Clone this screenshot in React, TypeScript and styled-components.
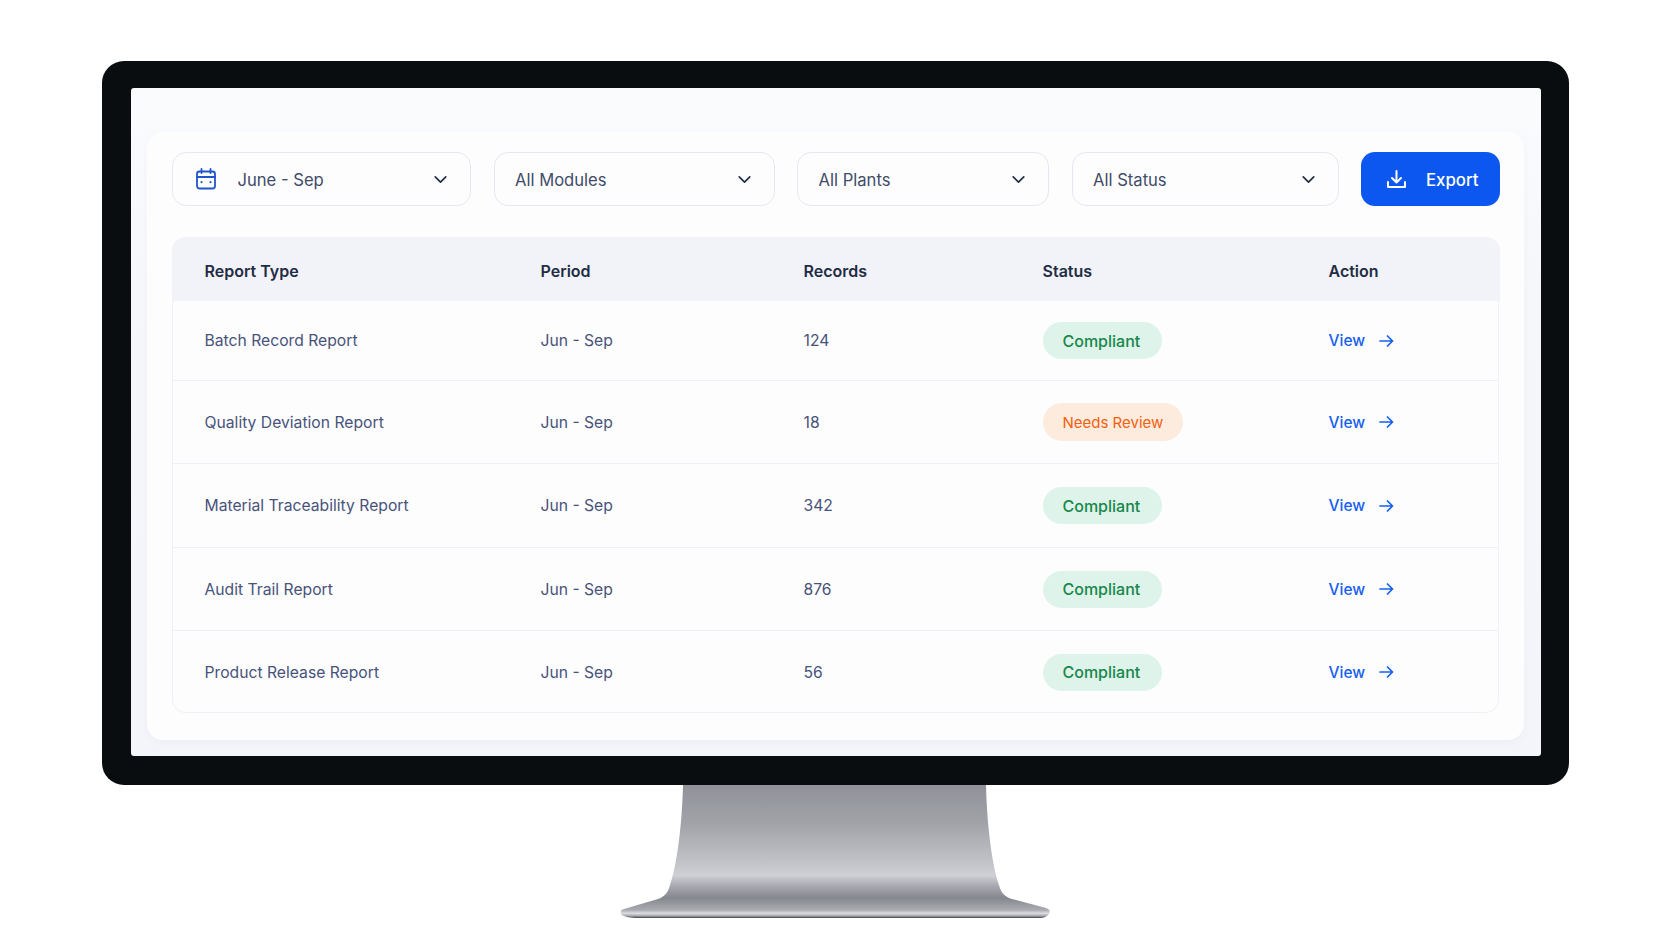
import React from 'react'
import styled, { createGlobalStyle } from 'styled-components'
import { ChevronDown } from 'lucide-react'

const GlobalStyle = createGlobalStyle`
  html, body {
    margin: 0;
    background: #fff;
  }
  body {
    font-family: 'Inter', 'Noto Sans', sans-serif;
    -webkit-font-smoothing: antialiased;
  }
`

const Page = styled.div`
  box-sizing: border-box;
  width: 1670px;
  height: 942px;
  padding: 61px 101px 0 102px;
  display: flex;
  flex-direction: column;
  align-items: center;
  overflow: hidden;
`

const Bezel = styled.div`
  box-sizing: border-box;
  width: 100%;
  height: 724px;
  padding: 27px 28px 29px 29px;
  background: #0a0d10;
  border-radius: 22px;
`

const Screen = styled.div`
  box-sizing: border-box;
  height: 100%;
  padding: 44px 17px 16px 16px;
  background: linear-gradient(180deg, #fafbfd 0%, #f6f7fb 30%, #f4f5fa 100%);
  border-radius: 3px;
`

const Panel = styled.div`
  box-sizing: border-box;
  height: 100%;
  padding: 20px 25px 26px 25px;
  background: #fdfdfe;
  border-radius: 16px;
  box-shadow: 0 3px 8px rgba(120, 130, 170, 0.05);
`

const Toolbar = styled.div`
  display: grid;
  grid-template-columns: 299px 281px 252px 267px 139px;
  column-gap: 22.5px;
  height: 54px;
  margin-bottom: 31px;
`

const Select = styled.div`
  box-sizing: border-box;
  display: flex;
  align-items: center;
  padding: 0 19px 0 20.5px;
  background: #fdfdfe;
  border: 1.5px solid #e6e8f1;
  border-radius: 14px;
  color: #414c68;
  font-size: 16.6px;
  span {
    padding-top: 1px;
  }
  svg:last-child {
    margin-left: auto;
    color: #262f48;
  }
`

const CalendarSvg = styled.svg`
  flex: none;
  margin: 0 22px 0 2px;
`

const ExportButton = styled.div`
  display: flex;
  align-items: center;
  gap: 20px;
  padding-left: 26px;
  background: #0b57f0;
  border-radius: 14px;
  color: #fff;
  font-size: 16.8px;
  font-weight: 500;
  span {
    padding-top: 1px;
  }
`

const Table = styled.div`
  box-sizing: border-box;
  height: 476px;
  border: 1.5px solid #f0f1f8;
  border-top: 0;
  border-radius: 14px;
`

const HeadRow = styled.div`
  box-sizing: border-box;
  display: grid;
  grid-template-columns: 336px 263px 239px 286px 1fr;
  align-items: center;
  height: 64px;
  margin: 0 -1.5px;
  padding: 3px 0 0 33px;
  background: #f2f3f8;
  border-radius: 14px 14px 0 0;
  color: #232c45;
  font-size: 16px;
  font-weight: 600;
`

const Row = styled.div<{ $height: number }>`
  box-sizing: border-box;
  display: grid;
  grid-template-columns: 336px 263px 239px 286px 1fr;
  align-items: center;
  height: ${p => p.$height}px;
  padding-left: 31.5px;
  border-bottom: 1.5px solid #f0f1f8;
  color: #47537a;
  font-size: 15.7px;
  &:last-child {
    border-bottom: 0;
  }
`

const Badge = styled.span<{ $tone: 'ok' | 'warn' }>`
  justify-self: start;
  display: inline-flex;
  align-items: center;
  height: ${p => (p.$tone === 'ok' ? 37 : 38)}px;
  padding: ${p => (p.$tone === 'ok' ? '0 22px 0 20px' : '0 20px 0 20px')};
  border-radius: 19px;
  background: ${p => (p.$tone === 'ok' ? '#def3e9' : '#fdebde')};
  color: ${p => (p.$tone === 'ok' ? '#17874c' : '#f55f10')};
  font-size: ${p => (p.$tone === 'ok' ? 16 : 15)}px;
  font-weight: ${p => (p.$tone === 'ok' ? 500 : 400)};
`

const ViewLink = styled.span`
  display: inline-flex;
  align-items: center;
  gap: 14px;
  color: #1560f0;
  font-size: 15.5px;
  font-weight: 500;
`

const Stand = styled.svg`
  display: block;
  flex: none;
`

const CalendarIcon = () => (
  <CalendarSvg width="20" height="22" viewBox="0 0 20 22" fill="none" stroke="#1f56c9" strokeWidth="1.8" strokeLinecap="round">
    <rect x="1" y="3.5" width="18" height="17" rx="2.5" />
    <path d="M1 9h18M5.5 1v4M14.5 1v4" />
    <path d="M5.5 14v.2M14.5 14v.2" strokeWidth="2" />
  </CalendarSvg>
)

const DownloadIcon = () => (
  <svg width="19" height="18" viewBox="0 0 19 18" fill="none" stroke="#fff" strokeWidth="2" strokeLinecap="round" strokeLinejoin="round">
    <path d="M9.5 1v11.5M5 8l4.5 4.5L14 8" />
    <path d="M1 12v5h17v-5" />
  </svg>
)

const ViewArrow = () => (
  <svg width="15" height="12" viewBox="0 0 15 12" fill="none" stroke="#1560f0" strokeWidth="1.7" strokeLinecap="round" strokeLinejoin="round">
    <path d="M1 6h12.5M8.5 1l5 5-5 5" />
  </svg>
)

const MonitorStand = () => (
  <Stand width="430" height="133" viewBox="0 0 430 133">
    <defs>
      <linearGradient id="neck" x1="0" y1="0" x2="0" y2="1">
        <stop offset="0" stopColor="#909199" />
        <stop offset="0.3" stopColor="#a2a4aa" />
        <stop offset="0.6" stopColor="#c4c5ca" />
        <stop offset="0.68" stopColor="#cfd0d5" />
        <stop offset="0.76" stopColor="#a8a9b0" />
        <stop offset="0.85" stopColor="#85878f" />
        <stop offset="0.94" stopColor="#a9abb1" />
        <stop offset="0.965" stopColor="#dcdde1" />
        <stop offset="0.985" stopColor="#a4a5ab" />
        <stop offset="1" stopColor="#3d3f45" />
      </linearGradient>
    </defs>
    <path
      d="M62 0H365C366 40 371 80 378 100C380 108 384 112 391 114L425 123C429 124 430 128 427 130C425 132 423 133 419 133H17C9 133 4 132 1 130C-2 128 -1 125 3 124L37 114C43 112 47 108 49 100C56 80 61 40 62 0Z"
      fill="url(#neck)"
    />
  </Stand>
)

const rows = [
  { name: 'Batch Record Report', records: '124', ok: true, height: 80 },
  { name: 'Quality Deviation Report', records: '18', ok: false, height: 83 },
  { name: 'Material Traceability Report', records: '342', ok: true, height: 84 },
  { name: 'Audit Trail Report', records: '876', ok: true, height: 83 },
  { name: 'Product Release Report', records: '56', ok: true, height: 82 },
]

export default function App() {
  return (
    <Page>
      <GlobalStyle />
      <Bezel>
        <Screen>
          <Panel>
            <Toolbar>
              <Select>
                <CalendarIcon />
                <span>June - Sep</span>
                <ChevronDown size={21} />
              </Select>
              <Select>
                <span>All Modules</span>
                <ChevronDown size={21} />
              </Select>
              <Select>
                <span>All Plants</span>
                <ChevronDown size={21} />
              </Select>
              <Select>
                <span>All Status</span>
                <ChevronDown size={21} />
              </Select>
              <ExportButton>
                <DownloadIcon />
                <span>Export</span>
              </ExportButton>
            </Toolbar>
            <Table>
              <HeadRow>
                <span>Report Type</span>
                <span>Period</span>
                <span>Records</span>
                <span>Status</span>
                <span>Action</span>
              </HeadRow>
              {rows.map(row => (
                <Row key={row.name} $height={row.height}>
                  <span>{row.name}</span>
                  <span>Jun - Sep</span>
                  <span>{row.records}</span>
                  <Badge $tone={row.ok ? 'ok' : 'warn'}>{row.ok ? 'Compliant' : 'Needs Review'}</Badge>
                  <ViewLink>
                    View
                    <ViewArrow />
                  </ViewLink>
                </Row>
              ))}
            </Table>
          </Panel>
        </Screen>
      </Bezel>
      <MonitorStand />
    </Page>
  )
}
